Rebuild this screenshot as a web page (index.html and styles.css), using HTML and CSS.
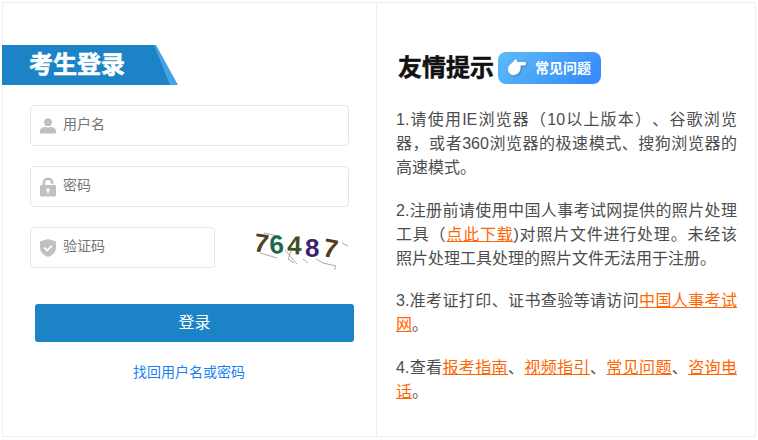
FILE: index.html
```html
<!DOCTYPE html>
<html>
<head>
  <meta charset="UTF-8">
  <title>考生登录</title>
  <link rel="stylesheet" href="styles.css">
</head>
<body>
<div class="main">
  <div class="login">
    <div class="banner"><h2>考生登录</h2></div>

    <div class="field">
      <svg class="ico" viewBox="0 0 16 16"><circle cx="8" cy="4.200" r="3.900"/><path d="M0 15.500v-2.600c0-2.600 3.200-3.900 5-4.200 1.800 1 4.200 1 6 0 1.800.3 5 1.600 5 4.200v2.600z"/></svg>
      <input type="text" placeholder="用户名">
    </div>
    <div class="field">
      <svg class="ico ico-lock" viewBox="0 0 16 20"><path d="M0 9.500c0-.8.600-1.400 1.400-1.400h1.100V6a5.500 5.500 0 0 1 11 0v.7h-2.600V6a2.900 2.900 0 0 0-5.800 0v2.100h9.500c.8 0 1.400.6 1.400 1.400v8.700c0 .8-.6 1.400-1.400 1.400H1.400c-.8 0-1.400-.6-1.400-1.400z"/><circle cx="8" cy="13" r="1.800" fill="#fff"/><path d="M7.300 14h1.400v2.600H7.300z" fill="#fff"/></svg>
      <input type="text" placeholder="密码">
    </div>
    <div class="code-row">
      <div class="field field-code">
        <svg class="ico ico-shield" viewBox="0 0 16 18"><path d="M8 0l8 2.600v6.200c0 4.300-3.400 7.600-8 9.200-4.600-1.600-8-4.900-8-9.200V2.600z"/><path d="M4.300 8.700l2.800 2.800 4.800-4.900" fill="none" stroke="#fff" stroke-width="1.800"/></svg>
        <input type="text" placeholder="验证码">
      </div>
      <svg class="captcha" viewBox="0 0 100 40">
        <g fill="none" stroke="#aaa" stroke-width="1">
          <path d="M10 23l17 5"/><path d="M35 20l12 14"/><path d="M41 21l-3 8 6 4"/><path d="M53 29l5 4"/><path d="M66 29l7 4 13 3-2 5"/><path d="M92 13l6 3"/>
          <path d="M14 3l14 3"/>
        </g>
        <text class="d1" transform="translate(3 21) rotate(8)">7</text>
        <text class="d2" transform="translate(20 24) rotate(-4)">6</text>
        <text class="d3" transform="translate(37 24) rotate(2)">4</text>
        <text class="d4" transform="translate(55 27)">8</text>
        <text class="d5" transform="translate(72 26) rotate(10)">7</text>
      </svg>
    </div>

    <a class="btn">登录</a>
    <a class="forget">找回用户名或密码</a>
  </div>

  <div class="tips">
    <div class="tips-head">
      <h3>友情提示</h3>
      <a class="faq">
        <svg viewBox="0 0 20 18"><path d="M1 11C1 7 3 5.500 5 4 6.500 3 7 1 8.500.5 10 0 10.500 1.500 10 3h7.500c2 0 2 3.500 0 3.500h-4c.5 2.500 0 5.500-2 7.500-2 2-5.500 3-7.500 1.500C2 14.200 1 13 1 11z"/></svg>
        <span>常见问题</span>
      </a>
    </div>
    <p>1.请使用IE浏览器（10以上版本）、谷歌浏览器，或者360浏览器的极速模式、搜狗浏览器的高速模式。</p>
    <p>2.注册前请使用中国人事考试网提供的照片处理工具（<a>点此下载</a>)对照片文件进行处理。未经该照片处理工具处理的照片文件无法用于注册。</p>
    <p>3.准考证打印、证书查验等请访问<a>中国人事考试网</a>。</p>
    <p>4.查看<a>报考指南</a>、<a>视频指引</a>、<a>常见问题</a>、<a>咨询电话</a>。</p>
  </div>
</div>
</body>
</html>
```

FILE: styles.css
```css
*{margin:0;padding:0;box-sizing:border-box;}
body{background:#fff;padding:2px 0 0 2px;font-family:"Liberation Sans","Noto Sans CJK SC",sans-serif;text-spacing-trim:space-all;}
.main{width:754px;height:435px;border:1px solid #eee;display:flex;}

.login{width:374px;border-right:1px solid #eee;}
.banner{width:176px;height:40px;margin:42px 0 20px -1px;background:#46a3e2;clip-path:polygon(0 0,154px 0,176px 40px,0 40px);}
.banner h2{height:40px;padding-left:27px;background:#1c83c6;clip-path:polygon(0 0,152px 0,168px 40px,0 40px);color:#fff;font-size:24px;line-height:40px;font-weight:bold;-webkit-text-stroke:.6px #fff;}

.field{width:319px;height:41px;margin:0 0 20px 27px;padding-left:9px;border:1px solid #e6e6e6;border-radius:4px;display:flex;align-items:center;}
.field input{flex:1;min-width:0;height:30px;margin-top:-3px;border:0;outline:0;font-size:14px;font-family:inherit;color:#333;}
.ico{width:16px;height:16px;margin-right:7px;fill:#c0c0c0;flex:none;}
.ico-lock{height:20px;}
.ico-shield{height:18px;}

.code-row{display:flex;align-items:flex-start;}
.field-code{width:185px;}
.captcha{width:100px;height:40px;margin:3px 0 0 35px;}
.captcha text{font-family:"Liberation Sans",sans-serif;font-size:26px;font-weight:bold;}
.d1,.d5{fill:#51401f;}
.d2{fill:#1b6b4b;}
.d3{fill:#3c5128;}
.d4{fill:#41216f;}

.btn{display:block;width:319px;height:38px;margin:16px 0 0 32px;background:#1c83c6;border-radius:3px;color:#fff;font-size:16px;line-height:38px;text-align:center;}
.forget{display:block;margin:21px 0 0 32px;width:308px;color:#1a7ff0;font-size:14px;line-height:18px;text-align:center;}

.tips{flex:1;padding:0 18px 0 19px;font-size:16px;line-height:24px;color:#4d4d4d;}
.tips-head{display:flex;align-items:center;margin:49px 0 24px 2px;}
.tips-head h3{font-size:24px;line-height:32px;color:#111;-webkit-text-stroke:.5px #111;}
.tips .faq{width:103px;height:32px;margin-left:4px;padding-left:9px;border-radius:8px;background:linear-gradient(135deg,#5cbdf9,#3386fb);display:flex;align-items:center;color:#fff;font-size:14px;line-height:16px;font-weight:bold;text-decoration:none;}
.faq svg{width:20px;height:18px;fill:#fff;margin-right:8px;filter:drop-shadow(1px 1px 1px rgba(0,0,0,.25));}
.tips p{margin-bottom:18.5px;text-align:justify;}
.tips p a{color:#f60;text-decoration:underline;}
```
